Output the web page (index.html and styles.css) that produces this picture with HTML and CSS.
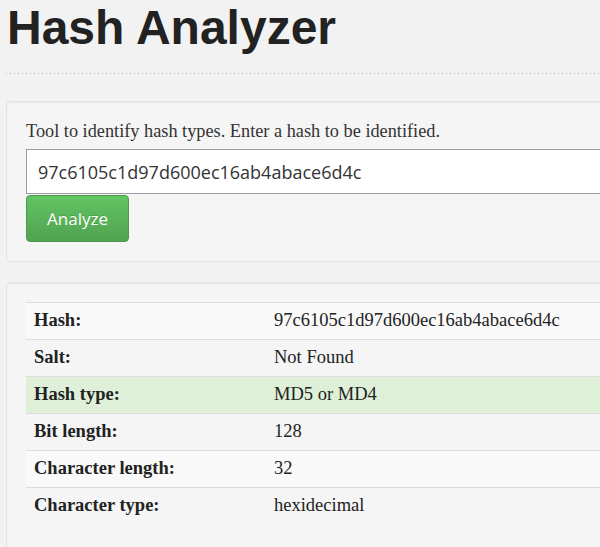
FILE: index.html
```html
<!DOCTYPE html>
<html>
<head>
<meta charset="utf-8">
<link rel="stylesheet" href="styles.css">
</head>
<body>
<div class="page">
  <h1 class="title">Hash Analyzer</h1>
  <div class="divider"></div>
  <div class="well">
    <p class="intro">Tool to identify hash types. Enter a hash to be identified.</p>
    <input class="hash-input" type="text" value="97c6105c1d97d600ec16ab4abace6d4c">
    <button class="btn-success" type="button">Analyze</button>
  </div>
  <div class="well results">
    <table class="result-table">
      <tr class="striped"><th>Hash:</th><td>97c6105c1d97d600ec16ab4abace6d4c</td></tr>
      <tr><th>Salt:</th><td>Not Found</td></tr>
      <tr class="success"><th>Hash type:</th><td>MD5 or MD4</td></tr>
      <tr><th>Bit length:</th><td>128</td></tr>
      <tr class="striped"><th>Character length:</th><td>32</td></tr>
      <tr><th>Character type:</th><td>hexidecimal</td></tr>
    </table>
  </div>
</div>
</body>
</html>
```
FILE: styles.css
```css
html, body {
  margin: 0;
  padding: 0;
  background: #f2f2f2;
  overflow: hidden;
}
.page {
  width: 700px;
  padding-left: 6px;
  font-family: "Liberation Serif", serif;
  color: #333;
}
.title {
  margin: 0;
  padding-left: 1px;
  font-family: "Liberation Sans", Arial, sans-serif;
  font-weight: bold;
  font-size: 48px;
  line-height: 55px;
  color: #222;
  height: 73px;
}
.divider {
  height: 1px;
  background-image: linear-gradient(to right, #b4b4b4 1px, transparent 1px);
  background-size: 4px 1px;
  margin-bottom: 27px;
}
.well {
  background: #f5f5f5;
  border: 1px solid #e3e3e3;
  border-radius: 4px;
  box-shadow: inset 0 1px 1px rgba(0,0,0,0.05);
  padding: 19px;
  margin-bottom: 20px;
}
.intro {
  margin: 0 0 8px 0;
  font-size: 18.3px;
  line-height: 20px;
}
.hash-input {
  display: block;
  box-sizing: border-box;
  width: 660px;
  height: 45px;
  margin: 0;
  padding: 0 11px;
  border: 1px solid #9a9aa6;
  border-radius: 0;
  background: #fff;
  font-family: "Open Sans", sans-serif;
  font-size: 18px;
  color: #333;
  outline: none;
}
.btn-success {
  display: block;
  margin: 1px 0 0 0;
  width: 103px;
  height: 47px;
  padding: 0;
  border: 1px solid #4a9a4a;
  border-radius: 4px;
  background: linear-gradient(to bottom, #62c462, #51a351);
  color: #fff;
  font-family: "Open Sans", sans-serif;
  font-size: 17px;
  text-shadow: 0 -1px 0 rgba(0,0,0,0.15);
}
.results {
  height: 300px;
}
.result-table {
  width: 700px;
  border-collapse: collapse;
  font-size: 18.5px;
}
.result-table th,
.result-table td {
  text-align: left;
  padding: 7px 8px 9px 8px;
  line-height: 20px;
  border-top: 1px solid #ddd;
  color: #222;
}
.result-table th {
  width: 224px;
  font-weight: bold;
}
.result-table .striped th,
.result-table .striped td {
  background: #f9f9f9;
}
.result-table .success th,
.result-table .success td {
  background: #dff0d8;
}
```
